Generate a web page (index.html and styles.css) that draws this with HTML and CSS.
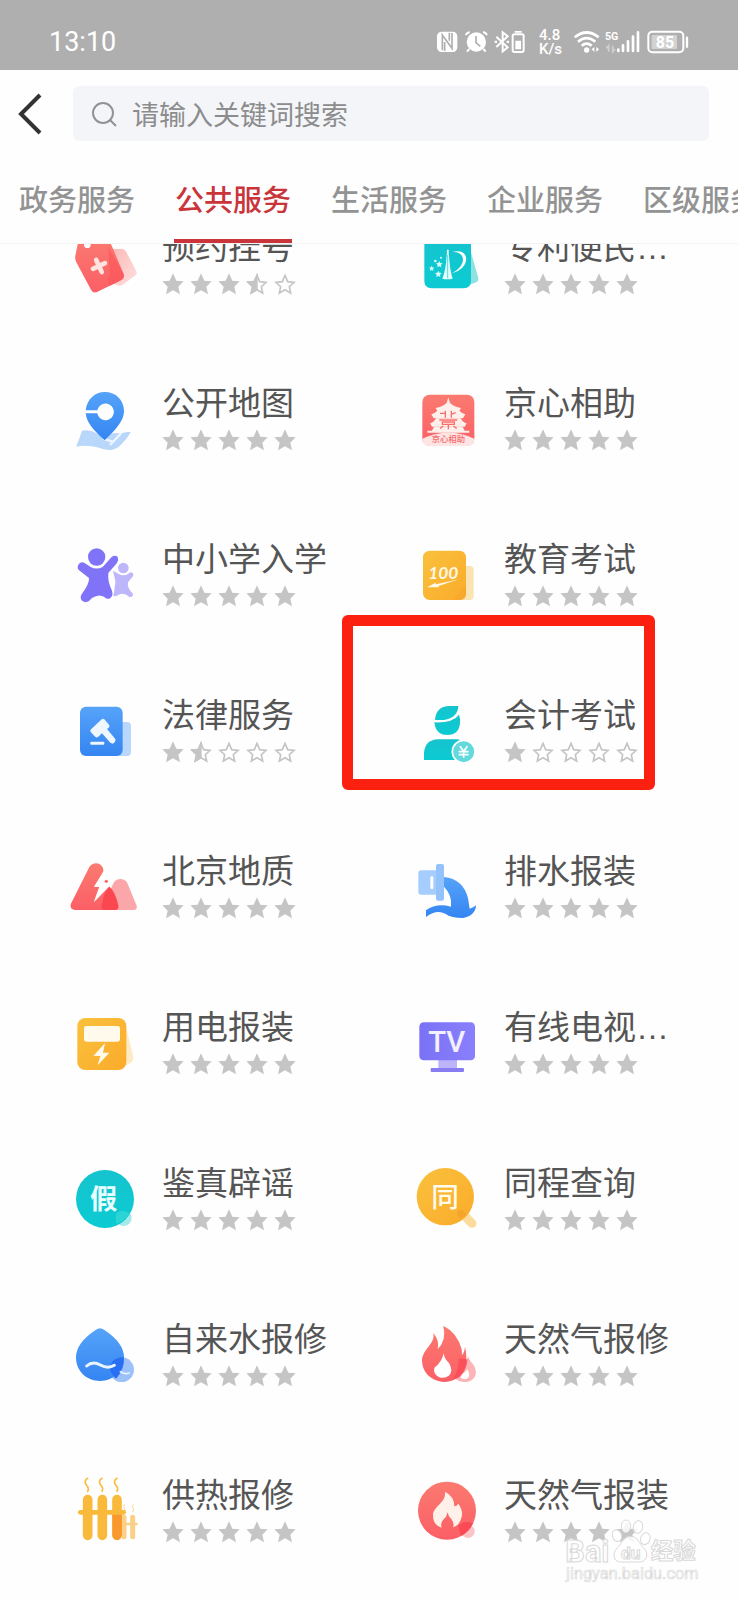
FILE: index.html
```html
<!DOCTYPE html>
<html lang="zh-CN">
<head>
    <meta charset="UTF-8">
    <meta name="viewport" content="width=device-width, initial-scale=1.0">
    <title>公共服务</title>
    <link rel="stylesheet" href="styles.css">
</head>
<body>
    <!-- 渐变和星星 -->
    <svg class="sprite" width="0" height="0" aria-hidden="true">
        <defs>
            <linearGradient id="red" x1="0" y1="0" x2="0" y2="1"><stop offset="0" stop-color="#fb7a70"/><stop offset="1" stop-color="#fb5f66"/></linearGradient>
            <linearGradient id="blue" x1="0" y1="0" x2="0" y2="1"><stop offset="0" stop-color="#55a3f9"/><stop offset="1" stop-color="#3585f2"/></linearGradient>
            <linearGradient id="cyan" x1="0" y1="0" x2="0" y2="1"><stop offset="0" stop-color="#15c3ce"/><stop offset="1" stop-color="#0ccbd2"/></linearGradient>
            <linearGradient id="yellow" x1="0" y1="0" x2="1" y2="1"><stop offset="0" stop-color="#f9c13c"/><stop offset="1" stop-color="#fbab2b"/></linearGradient>
            <linearGradient id="purple" x1="0" y1="0" x2="1" y2="0"><stop offset="0" stop-color="#7a72f5"/><stop offset="1" stop-color="#8a80fc"/></linearGradient>
            <linearGradient id="pink" x1="0" y1="0" x2="1" y2="1"><stop offset="0" stop-color="#fbb6b4"/><stop offset="1" stop-color="#fde0de"/></linearGradient>
        </defs>

        <symbol id="star-full" viewBox="0 0 66 66">
            <path fill="#c5c5c5" d="M33 1l10 22 22 2-16 16 5 23-21-12-21 12 5-23L1 25l22-2z"/>
        </symbol>
        <symbol id="star-empty" viewBox="0 0 66 66">
            <path fill="#fff" stroke="#c5c5c5" stroke-width="5" d="M33 7l8 19 19 2-14 13 4 19-17-10-17 10 4-19L6 28l19-2z"/>
        </symbol>
        <symbol id="star-half" viewBox="0 0 66 66">
            <path fill="#fff" stroke="#c5c5c5" stroke-width="5" d="M33 7l8 19 19 2-14 13 4 19-17-10-17 10 4-19L6 28l19-2z"/>
            <path fill="#c5c5c5" d="M35 1l-2 0-10 22-22 2 16 16-5 23 23-13z"/>
        </symbol>
    </svg>

    <!-- 服务图标 -->
    <template id="icons">
        <svg>
        <symbol id="icon-hospital" viewBox="84 -18 216 216">
            <path fill="url(#pink)" d="M210 42h34q10 0 15 9l30 58q4 8-4 13l-37 27q-7 5-15 2l-33-10z"/>
            <path fill="url(#red)" d="M117 8L106 62q-2 11 3 20l44 82q6 12 18 7l72-35q12-6 8-19L205 8z"/>
            <path fill="#fb4f55" opacity=".5" d="M205 36l46 82q4 12-8 18l-34 17q-9-16 0-36z"/>
            <circle cx="142" cy="29" r="10" fill="#fff"/>
            <path transform="rotate(-25 177 93)" stroke="#ffe3df" stroke-width="14" stroke-linecap="round" d="M157 93h40M177 73v40"/>
        </symbol>
        <symbol id="icon-patent" viewBox="60 -18 216 216">
            <path fill="#8fe2e2" d="M240 42l25 86q2 12-9 15l-30 9z"/>
            <path fill="url(#cyan)" d="M103 6h140v132q0 22-22 22h-96q-22 0-22-22z"/>
            <path fill="#e6ffff" d="M171 44q-2 58-14 87 15 4 31 0-10-30-12-87z"/>
            <path fill="#fff" d="M187 51c56-15 56 52-3 64 44-18 48-66 3-64z"/>
            <path stroke="#0ccbd2" stroke-width="2" d="M173 60v70"/>
            <g fill="#d9fbfb">
                <path d="M148 78l3 6 7 1-5 5 1 7-6-3-6 3 1-7-5-5 7-1zM145 107l3 6 7 1-5 5 1 7-6-3-6 3 1-7-5-5 7-1zM125 92l2 5 6 1-4 4 1 6-5-3-5 3 1-6-4-4 6-1z"/>
                <circle cx="136" cy="78" r="4"/><circle cx="153" cy="68" r="3"/>
            </g>
        </symbol>
        <symbol id="icon-map" viewBox="84 450 216 216">
            <path fill="#b9d6fb" d="M126 587q23-4 44 8t49 0l27-1q12-3 27-4-10 18-26 35-16 20-37 20-16 1-38-8-31-8-64-2 10-23 18-48z"/>
            <path stroke="#eef6ff" stroke-width="7" d="M244 594l-34 36M188 611l30 9"/>
            <path fill="url(#blue)" d="M137 526c4-34 28-55 57-55 34 0 58 24 58 57 0 28-22 53-58 88-32-30-54-51-57-81h35a25 25 0 1 0 0-9z"/>
        </symbol>
        <symbol id="icon-help" viewBox="60 450 216 216">
            <rect x="97" y="479" width="156" height="154" rx="22" fill="url(#red)"/>
            <path fill="#fde5e4" d="M97 611q78-35 156 0-1 22-22 22H119q-21 0-22-22z"/>
            <g fill="#fff0ec">
                <path d="M175 487l5 17q13 12 33 15l-5 9h-66l-5-9q20-3 33-15z"/>
                <path d="M144 526h62q10 10 20 12l-7 12h-88l-7-12q10-2 20-12z"/>
                <path d="M138 550h74q7 13 18 15l-6 10h-98l-6-10q11-2 18-15z"/>
                <path d="M132 575h86l6 12h14v6H112v-6h14z"/>
            </g>
            <path fill="none" stroke="#fb6f6b" stroke-width="4" d="M166 527v21M150 535h16M184 527v21M184 538l13-5M148 555h54M157 561h36v7h-36zM175 568v15M160 573l-10 7M190 573l10 7"/>
            <text x="175" y="620" font-size="25" font-weight="500" text-anchor="middle" fill="#f5696a">京心相助</text>
        </symbol>
        <symbol id="icon-school" viewBox="84 33 216 216">
            <g fill="#bdb6fb">
                <circle cx="250" cy="114" r="16"/>
                <path d="M219 122l17 10q15 8 28 0l7-5q9 0 9 10l-16 20q-4 15 15 35 1 10-11 9-16-15-32-7-15 10-20-2 11-24 10-40z"/>
            </g>
            <circle cx="170" cy="81" r="26" fill="#8073f8"/>
            <path fill="none" stroke="#fff" stroke-width="6" d="M234 101l-23 25q-5 20 10 50l-4 20"/>
            <path fill="#8073f8" d="M134 99l18 12q18 9 36 0l27-30q10-8 18 0 4 10-2 18l-26 30q-3 25 11 53 4 14-4 21-9 8-19-2-16-11-37 3l-9 9q-10 7-20 0-8-9-3-19 25-33 23-50l-26-20q-12-8-6-20 8-11 19-5z"/>
        </symbol>
        <symbol id="icon-exam" viewBox="240 33 216 216">
            <rect x="385" y="108" width="46" height="102" rx="11" fill="#fbe4b4"/>
            <rect x="279" y="62" width="129" height="148" rx="20" fill="url(#yellow)"/>
            <path fill="#f6a52c" opacity=".6" d="M408 165v29q-1 16-18 16h-22z"/>
            <text x="340" y="146" font-size="52" font-weight="700" font-style="italic" text-anchor="middle" class="score" fill="#fff8e4">100</text>
            <path fill="#fff8e4" d="M291 172l26-14 1 5 68-15-60 20 1 4z"/>
        </symbol>
        <symbol id="icon-law" viewBox="84 501 216 216">
            <rect x="222" y="576" width="51" height="102" rx="12" fill="#b9d7fc"/>
            <rect x="120" y="530" width="128" height="148" rx="18" fill="url(#blue)"/>
            <g fill="#eef6ff">
                <rect x="151" y="635" width="42" height="9" rx="3"/>
                <path d="M186 567q5-2 9 3l12 14q4 6-2 10l-4 3 25 30q2 10-8 14l-7-3-25-28-12 11q-6 3-10-2l-12-13q-3-6 2-9z"/>
            </g>
        </symbol>
        <symbol id="icon-account" viewBox="240 501 216 216">
            <path fill="url(#cyan)" d="M315 570q3-41 43-42h27q-1 35-43 42z"/>
            <path fill="url(#cyan)" d="M313 577q56 2 74-23 5 12 3 26-3 35-38 35t-39-38z"/>
            <path fill="url(#cyan)" d="M282 690v-20q2-40 42-42h58q20 2 30 20v42z"/>
            <circle cx="401" cy="665" r="34" fill="#62d9dc" stroke="#fff" stroke-width="5"/>
            <path fill="none" stroke="#fff" stroke-width="5" stroke-linecap="round" d="M391 650l10 14 10-14M401 664v18M388 665h26M388 674h26"/>
        </symbol>
        <symbol id="icon-geology" viewBox="84 39 216 216">
            <path fill="#fba6a8" d="M186 200l36-73q8-10 19-10 14 0 21 12l28 68q3 12-10 13h-85q-10 0-9-10z"/>
            <path fill="url(#red)" d="M92 193l56-112q8-11 20-11 14 0 21 14 4 9-3 18l-23 38 17-1-14 43 40-44 29 59q3 12-8 13H104q-15-2-12-17z"/>
            <path fill="#fb4850" d="M207 139q11 10 17 23 7 15 11 36-1 12-12 12h-30q-10-1-8-12l8-36z"/>
            <path fill="#fff" d="M190 95l-28 45h16l-17 47 49-50h-16l15-17-17 2z"/>
            <circle cx="199" cy="124" r="5" fill="#fb6b6d"/>
        </symbol>
        <symbol id="icon-drain" viewBox="60 39 216 216">
            <path fill="url(#blue)" d="M162 111q58 6 72 64 3 18 5 31 10-2 19-10-1 30-39 38-35 0-53-13-27-14-58 10V211q31-23 75-11 4-35-21-60z"/>
            <rect x="85" y="91" width="70" height="73" rx="8" fill="#a5cdfd"/>
            <rect x="138" y="72" width="24" height="110" rx="6" fill="#94c3fc"/>
            <rect x="121" y="109" width="9" height="38" rx="4" fill="#fff"/>
        </symbol>
        <symbol id="icon-power" viewBox="84 507 216 216">
            <path fill="#fcebc5" d="M258 562l22 88q1 15-12 21l-28 13z"/>
            <rect x="112" y="534" width="147" height="156" rx="24" fill="url(#yellow)"/>
            <rect x="132" y="558" width="108" height="47" rx="7" fill="#fffaec"/>
            <path fill="#fffaec" d="M195 609l-35 39h21l-8 28 35-38h-19z"/>
        </symbol>
        <symbol id="icon-tv" viewBox="60 507 216 216">
            <rect x="145" y="655" width="56" height="33" fill="#bbb4fb"/>
            <rect x="122" y="684" width="100" height="12" rx="3" fill="#877cf1"/>
            <rect x="88" y="547" width="167" height="114" rx="13" fill="url(#purple)"/>
            <text x="170" y="636" font-size="88" font-weight="500" text-anchor="middle" class="latin" fill="#f4f0ff">TV</text>
        </symbol>
        <symbol id="icon-fake" viewBox="84 45 216 216">
            <circle cx="251" cy="204" r="24" fill="#a6e9e9"/>
            <circle cx="195" cy="147" r="87" fill="url(#cyan)"/>
            <path fill="#2bd5d5" d="M229 190q18-15 40 0-18 25-40 31-4-15 0-31z"/>
            <text x="191" y="176" font-size="82" font-weight="700" text-anchor="middle" fill="#e8ffff">假</text>
        </symbol>
        <symbol id="icon-same" viewBox="60 45 216 216">
            <path stroke="#fbdc9d" stroke-width="27" stroke-linecap="round" d="M226 200l20 20"/>
            <circle cx="166" cy="140" r="86" fill="url(#yellow)"/>
            <path fill="#f6a52c" d="M202 183q13-12 28 11l-18 13q-14-11-10-24z"/>
            <text x="165" y="171" font-size="83" font-weight="500" text-anchor="middle" fill="#fffbef">同</text>
        </symbol>
        <symbol id="icon-water" viewBox="84 513 216 216">
            <path fill="url(#blue)" d="M168 539q12-9 24 0 60 39 60 83c0 43-33 71-72 71s-72-28-72-71q0-44 60-83z"/>
            <circle cx="245" cy="659" r="37" fill="#4a8ef8" opacity=".55"/>
            <path fill="#286ff3" d="M218 634q15-13 33-12 4 35-23 64-30-25-10-52z"/>
            <path fill="none" stroke="#eaf5ff" stroke-width="9" stroke-linecap="round" d="M140 648q18-16 41-3t42 1"/>
            <path fill="none" stroke="#eaf5ff" stroke-width="5" stroke-linecap="round" d="M241 665q12 9 26 4"/>
        </symbol>
        <symbol id="icon-gas" viewBox="60 513 216 216">
            <path fill="#fbb5b7" d="M235 618q2 14 16 26 19 37-16 51-24 4-38-9l27-40z"/>
            <path fill="#fff" d="M231 656q15 25-4 32-24-2-10-17 12-5 14-15z"/>
            <path fill="url(#red)" d="M160 527q42 21 55 71l1 17q7-6 9-25 13 60-15 88-31 25-65 15-46-14-49-60c0-36 41-51 34-84q19 23 13 48 27-25 17-70z"/>
            <path fill="#fff" d="M161 610q2 17 16 29 13 21 1 37-15 12-32 5-17-10-13-28 22-15 28-43z"/>
            <path fill="#fb4652" opacity=".7" d="M207 625l26 3q-3 30-19 47-10 13-24 10 15-21 17-60z"/>
        </symbol>
        <symbol id="icon-heat" viewBox="84 75 216 216">
            <g fill="none" stroke="#f9bd3f" stroke-width="5" stroke-linecap="round">
                <path d="M143 79q-12 7-5 19 11 11 5 20M186 79q-12 7-5 19 11 11 5 20M231 79q-12 7-5 19 11 11 5 20"/>
                <path stroke="#fbd995" stroke-width="3" d="M253 158q-5 5 0 10t-1 12M279 158q-5 5 0 10t-1 12"/>
            </g>
            <path stroke="#fad086" stroke-width="15" stroke-linecap="round" d="M252 196v58M278 196v58"/>
            <path stroke="#fad086" stroke-width="7" stroke-linecap="round" d="M232 216h58"/>
            <path stroke="#f9ba3c" stroke-width="14" stroke-linecap="round" d="M121 181h130"/>
            <path stroke="#f9ba3c" stroke-width="29" stroke-linecap="round" d="M143 143v107M187 143v107M231 143v107"/>
            <path fill="#fa9830" d="M217 188h29v61q-4 15-15 15-13-2-14-15z"/>
        </symbol>
        <symbol id="icon-gas-install" viewBox="60 81 216 216">
            <circle cx="234" cy="244" r="20" fill="#fcc3c6"/>
            <circle cx="171" cy="182" r="87" fill="url(#red)"/>
            <path fill="#fb4450" opacity=".8" d="M207 226q18-17 42-6-11 25-36 38-8-18-6-32z"/>
            <path fill="#fff0e9" d="M165 125q28 14 28 44 7 0 12-8 19 27 6 51-7 16-22 20 5-12-5-25-10-9-11-20-3 14-14 23-9 11-4 23-26-7-26-37c1-29 40-36 36-71z"/>
        </symbol>
        </svg>
    </template>

    <div class="header">
        <div class="status-bar">
            <span class="time">13:10</span>
            <div class="status-icons">
                <svg width="24" height="26" viewBox="204 87 72 78">
                    <rect x="204" y="95" width="61" height="61" rx="14" fill="#fff"/>
                    <path fill="none" stroke="#afafaf" stroke-width="5" d="M220 151v-46l29 40v-46M227 126v27M241 98v24"/>
                </svg>
                <svg width="31" height="26" viewBox="276 87 93 78">
                    <circle cx="322" cy="126" r="29" fill="#fff"/>
                    <path fill="none" stroke="#fff" stroke-width="6" d="M290 105q4-7 12-9M342 96q9 2 12 9M301 147l-7 8M343 147l7 8"/>
                    <path fill="none" stroke="#afafaf" stroke-width="5" d="M321 108v20l13 11"/>
                </svg>
                <svg width="36" height="26" viewBox="369 87 108 78">
                    <path fill="none" stroke="#fff" stroke-width="6" d="M382 110l34 32-15 12V97l15 12-34 32"/>
                    <path fill="#fff" d="M377 122h7v7h-7zM413 122h7v7h-7zM437 93h21v5h-21zM439 122h17v26h-17z"/>
                    <rect x="431" y="103" width="33" height="53" rx="5" fill="none" stroke="#fff" stroke-width="6"/>
                </svg>
                <div class="speed"><span>4.8</span><span>K/s</span></div>
                <svg width="30" height="26" viewBox="612 87 90 78">
                    <path fill="none" stroke="#fff" stroke-width="8" d="M617 112q36-29 72 0M627 125q26-21 52 0M638 137q15-12 30 0"/>
                    <circle cx="653" cy="150" r="8" fill="#fff"/>
                    <path fill="#fff" d="M676 141v15l-8-8zM682 141v15l8-8z"/>
                </svg>
                <svg width="42" height="26" viewBox="702 87 126 78">
                    <text x="708" y="121" font-size="32" font-weight="700" class="latin" fill="#fff">5G</text>
                    <path fill="none" stroke="#d0d0d0" stroke-width="5" d="M719 155v-18l-7 8M731 137v18l7-8"/>
                    <path stroke="#fff" stroke-width="8" stroke-linecap="round" d="M748 149v4M762 136v17M777 124v29M792 110v43M807 97v56"/>
                </svg>
                <svg width="44" height="26" viewBox="828 87 132 78">
                    <rect x="838" y="95" width="105" height="62" rx="12" fill="none" stroke="#fff" stroke-width="6"/>
                    <rect x="848" y="105" width="76" height="42" rx="4" fill="#d2d2d2"/>
                    <path stroke="#fff" stroke-width="7" stroke-linecap="round" d="M954 113v27"/>
                    <text x="888" y="143" font-size="48" font-weight="700" text-anchor="middle" class="latin" fill="#fff">85</text>
                </svg>
            </div>
        </div>

        <form class="search-row">
            <button type="button" class="back-btn" aria-label="返回">
                <svg width="26" height="42" viewBox="0 0 26 42">
                    <path fill="none" stroke="#333" stroke-width="4" d="M23 2L4 21l19 19"/>
                </svg>
            </button>
            <div class="search-box">
                <svg width="26" height="26" viewBox="0 0 26 26">
                    <circle cx="12" cy="12" r="10" fill="none" stroke="#909296" stroke-width="2"/>
                    <path stroke="#909296" stroke-width="2" d="M19 19l6 6"/>
                </svg>
                <input type="search" placeholder="请输入关键词搜索" aria-label="请输入关键词搜索">
            </div>
        </form>

        <nav class="tabs">
            <a href="#gov">政务服务</a>
            <a href="#public" class="active">公共服务</a>
            <a href="#life">生活服务</a>
            <a href="#company">企业服务</a>
            <a href="#district">区级服务</a>
        </nav>
    </div>

    <main class="service-list" id="serviceList"></main>

    <svg class="watermark" width="138" height="66" viewBox="516 204 414 198" aria-hidden="true">
        <g fill="#fff" fill-opacity=".8" stroke="#d9d9d9" stroke-width="3">
            <ellipse cx="708" cy="229" rx="14" ry="19"/>
            <ellipse cx="744" cy="231" rx="14" ry="19" transform="rotate(12 744 231)"/>
            <ellipse cx="681" cy="257" rx="14" ry="18" transform="rotate(-20 681 257)"/>
            <ellipse cx="766" cy="266" rx="14" ry="18" transform="rotate(20 766 266)"/>
            <path d="M722 259c23 0 24 22 41 37 14 14 8 40-15 40h-54c-24 0-28-25-14-40 17-15 19-37 42-37z"/>
            <text x="526" y="335" font-size="92" font-weight="700" class="latin">Bai</text>
            <text x="722" y="327" font-size="52" font-weight="700" text-anchor="middle" class="latin">du</text>
            <text x="782" y="327" font-size="68" font-weight="700">经验</text>
            <text x="528" y="386" font-size="49" stroke-width="2" class="latin">jingyan.baidu.com</text>
        </g>
    </svg>

    <script>
        // 服务列表
        const services = [
            { name: '预约挂号', icon: 'hospital', score: 3.5 },
            { name: '专利便民…', icon: 'patent', score: 5 },
            { name: '公开地图', icon: 'map', score: 5 },
            { name: '京心相助', icon: 'help', score: 5 },
            { name: '中小学入学', icon: 'school', score: 5 },
            { name: '教育考试', icon: 'exam', score: 5 },
            { name: '法律服务', icon: 'law', score: 1.5 },
            { name: '会计考试', icon: 'account', score: 1, marked: true },
            { name: '北京地质', icon: 'geology', score: 5 },
            { name: '排水报装', icon: 'drain', score: 5 },
            { name: '用电报装', icon: 'power', score: 5 },
            { name: '有线电视…', icon: 'tv', score: 5 },
            { name: '鉴真辟谣', icon: 'fake', score: 5 },
            { name: '同程查询', icon: 'same', score: 5 },
            { name: '自来水报修', icon: 'water', score: 5 },
            { name: '天然气报修', icon: 'gas', score: 5 },
            { name: '供热报修', icon: 'heat', score: 5 },
            { name: '天然气报装', icon: 'gas-install', score: 5 }
        ];

        const icons = document.getElementById('icons').content;

        function renderIcon(name) {
            const symbol = icons.getElementById('icon-' + name);
            return `<svg class="service-icon" viewBox="${symbol.getAttribute('viewBox')}">${symbol.innerHTML}</svg>`;
        }

        // 星级
        function renderStars(score) {
            let html = '';
            for (let i = 1; i <= 5; i++) {
                const type = score >= i ? 'full' : (score >= i - 0.5 ? 'half' : 'empty');
                html += `<svg class="star"><use href="#star-${type}"/></svg>`;
            }
            return html;
        }

        function renderServices() {
            document.getElementById('serviceList').innerHTML = services.map(s => `
                <a class="service${s.marked ? ' marked' : ''}" href="#${s.icon}">
                    ${renderIcon(s.icon)}
                    <div class="service-info">
                        <span class="service-name">${s.name.replace('…', '<span class="ellipsis">…</span>')}</span>
                        <div class="stars">${renderStars(s.score)}</div>
                    </div>
                </a>
            `).join('');
        }

        renderServices();
    </script>
</body>
</html>
```
FILE: styles.css
```css
*,
*::after {
    box-sizing: border-box;
}

body {
    margin: 0;
    position: relative;
    min-height: 100vh;
    background: #fefefe;
    font-family: "Noto Sans CJK SC", "Noto Sans", sans-serif;
    color: #555;
    overflow-x: hidden;
}

a {
    color: inherit;
    text-decoration: none;
}

.sprite {
    position: absolute;
}

.latin {
    font-family: Roboto, "Noto Sans", sans-serif;
}

.score {
    font-family: Lato, "Noto Sans", sans-serif;
}

/* 顶部 */
.header {
    position: relative;
    z-index: 1;
    background: #fefefe;
    border-bottom: 1px solid #f3f3f3;
}

.status-bar {
    display: flex;
    align-items: center;
    justify-content: space-between;
    height: 70px;
    padding: 14px 49px 0 49px;
    background: #afafaf;
    color: white;
    font-family: Roboto, "Noto Sans", sans-serif;
}

.time {
    font-size: 27px;
}

.status-icons {
    display: flex;
    align-items: center;
}

.speed {
    display: flex;
    flex-direction: column;
    width: 45px;
    padding-left: 11px;
    font-size: 15px;
    font-weight: 500;
    line-height: 14px;
}

.search-row {
    display: flex;
    align-items: center;
    padding: 16px 29px 0 17px;
}

.back-btn {
    display: flex;
    flex: none;
    width: 56px;
    padding: 0;
    border: none;
    background: none;
    cursor: pointer;
}

.search-box {
    display: flex;
    flex: 1;
    align-items: center;
    gap: 15px;
    height: 55px;
    padding: 0 18px;
    border-radius: 6px;
    background: #f4f5f9;
}

.search-box input {
    flex: 1;
    min-width: 0;
    padding: 0;
    border: none;
    outline: none;
    background: none;
    font-family: inherit;
    font-size: 27px;
    color: #555;
}

.search-box input::placeholder {
    color: #8c8c8c;
    opacity: 1;
}

.tabs {
    display: flex;
    gap: 38px;
    padding: 37px 0 0 18px;
    overflow: hidden;
}

.tabs a {
    flex: none;
    padding: 0 1px 21px;
    border-bottom: 4px solid transparent;
    font-size: 29px;
    font-weight: 500;
    line-height: 40px;
    color: #939393;
}

.tabs .active {
    color: #c9353a;
    border-color: #c9353a;
}

/* 列表滚动到标签栏下方 */
.service-list {
    display: grid;
    grid-template-columns: 1fr 1fr;
    margin-top: -57px;
    padding: 0 27px;
}

.service {
    position: relative;
    display: flex;
    align-items: center;
    gap: 22px;
    height: 156px;
    padding-left: 41px;
}

.service-icon {
    flex: none;
    width: 72px;
    height: 72px;
}

.service-info {
    padding-bottom: 12px;
    white-space: nowrap;
}

.service-name {
    display: block;
    margin-bottom: 6px;
    font-size: 33px;
    line-height: 44px;
}

.ellipsis {
    font-family: "Liberation Sans", sans-serif;
    line-height: 1;
}

.stars {
    display: flex;
    gap: 6px;
}

.star {
    width: 22px;
    height: 22px;
}

/* 红框标记 */
.marked::after {
    content: "";
    position: absolute;
    left: -27px;
    top: -40px;
    width: 313px;
    height: 175px;
    border: 11px solid #fc2010;
    border-radius: 6px;
}

.watermark {
    position: absolute;
    right: 38px;
    bottom: 16px;
}
```
